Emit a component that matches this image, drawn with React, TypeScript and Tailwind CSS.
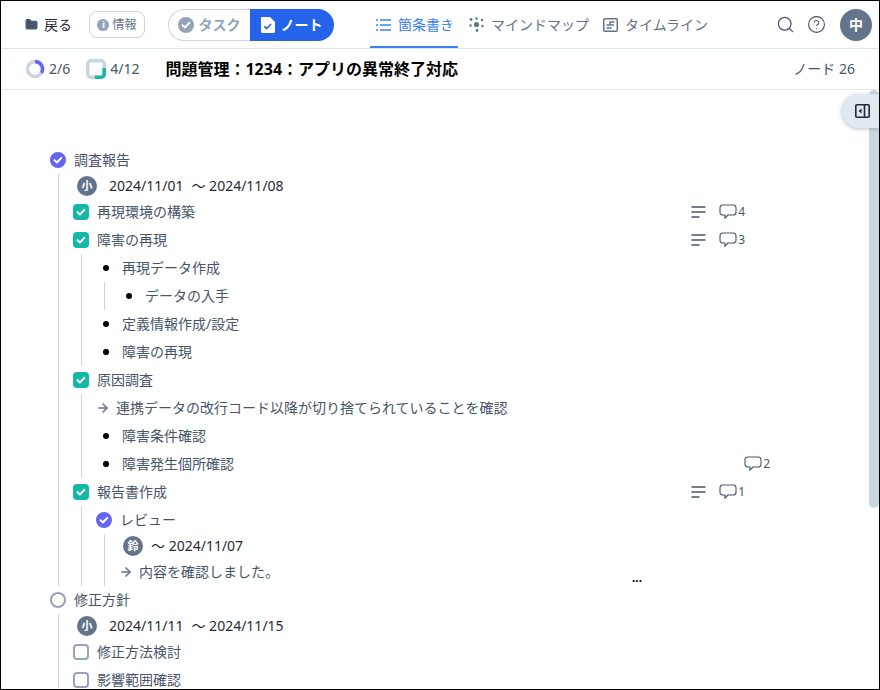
import type { ReactNode } from 'react'
import { ArrowRight, Folder, HelpCircle, Search } from 'lucide-react'

type Kind = 'circle' | 'check' | 'bullet' | 'arrow' | 'date'

type TreeNode = {
  kind: Kind
  text: string
  start?: string
  done?: boolean
  who?: string
  lines?: boolean
  comments?: number
  commentsOnly?: boolean
  children?: TreeNode[]
}

const tree: TreeNode[] = [
  {
    kind: 'circle',
    text: '調査報告',
    done: true,
    children: [
      { kind: 'date', who: '小', start: '2024/11/01', text: '〜 2024/11/08' },
      { kind: 'check', text: '再現環境の構築', done: true, lines: true, comments: 4 },
      {
        kind: 'check',
        text: '障害の再現',
        done: true,
        lines: true,
        comments: 3,
        children: [
          {
            kind: 'bullet',
            text: '再現データ作成',
            children: [{ kind: 'bullet', text: 'データの入手' }],
          },
          { kind: 'bullet', text: '定義情報作成/設定' },
          { kind: 'bullet', text: '障害の再現' },
        ],
      },
      {
        kind: 'check',
        text: '原因調査',
        done: true,
        children: [
          { kind: 'arrow', text: '連携データの改行コード以降が切り捨てられていることを確認' },
          { kind: 'bullet', text: '障害条件確認' },
          { kind: 'bullet', text: '障害発生個所確認', comments: 2, commentsOnly: true },
        ],
      },
      {
        kind: 'check',
        text: '報告書作成',
        done: true,
        lines: true,
        comments: 1,
        children: [
          {
            kind: 'circle',
            text: 'レビュー',
            done: true,
            children: [
              { kind: 'date', who: '鈴', text: '〜 2024/11/07' },
              { kind: 'arrow', text: '内容を確認しました。' },
            ],
          },
        ],
      },
    ],
  },
  {
    kind: 'circle',
    text: '修正方針',
    children: [
      { kind: 'date', who: '小', start: '2024/11/11', text: '〜 2024/11/15' },
      { kind: 'check', text: '修正方法検討' },
      { kind: 'check', text: '影響範囲確認' },
    ],
  },
]

function CheckMark({ className }: { className?: string }) {
  return (
    <svg viewBox="0 0 16 16" className={className} fill="none" stroke="currentColor" strokeWidth="2" strokeLinecap="round" strokeLinejoin="round">
      <path d="M4.6 8.3l2.3 2.2 4.4-4.6" />
    </svg>
  )
}

function LinesIcon() {
  return (
    <svg width="16" height="13" viewBox="0 0 16 13" className="text-[#475569]" fill="none" stroke="currentColor" strokeWidth="1.5">
      <path d="M0.5 1h14M0.5 6h14M0.5 11h8" />
    </svg>
  )
}

function CommentIcon() {
  return (
    <svg width="18" height="16" viewBox="0 0 18 16" className="text-[#475569]" fill="none" stroke="currentColor" strokeWidth="1.1" strokeLinejoin="round">
      <path d="M4 1h10c1.8 0 3 1.1 3 2.8v4.4C17 10 15.8 11 14 11H9l-3.2 3.3.3-3.3H4C2.200 11 1 10 1 8.200V3.800C1 2.100 2.200 1 4 1z" />
    </svg>
  )
}

function Marker({ node }: { node: TreeNode }) {
  if (node.kind === 'circle') {
    return node.done ? (
      <span className="flex h-4 w-4 shrink-0 items-center justify-center rounded-full bg-[#6366f1] text-white">
        <CheckMark className="h-4 w-4" />
      </span>
    ) : (
      <span className="h-4 w-4 shrink-0 rounded-full border-2 border-[#94a3b8]" />
    )
  }
  if (node.kind === 'check') {
    return node.done ? (
      <span className="flex h-4 w-4 shrink-0 items-center justify-center rounded-[4px] bg-[#14b8a6] text-white">
        <CheckMark className="h-4 w-4" />
      </span>
    ) : (
      <span className="h-4 w-4 shrink-0 rounded-[4px] border-2 border-[#94a3b8]" />
    )
  }
  return null
}

function Row({ node }: { node: TreeNode }) {
  let lead: ReactNode
  if (node.kind === 'bullet') {
    lead = (
      <span className="flex w-[26px] shrink-0 pl-[7px]">
        <span className="h-[6px] w-[6px] rounded-full bg-black" />
      </span>
    )
  } else if (node.kind === 'arrow') {
    lead = (
      <span className="flex w-5 shrink-0">
        <ArrowRight size={14} strokeWidth={2.6} className="text-[#64748b]" />
      </span>
    )
  } else if (node.kind === 'date') {
    lead = (
      <span
        className={`ml-1 flex h-5 w-5 shrink-0 items-center justify-center rounded-full bg-[#64748b] text-[11px] font-bold text-white ${
          node.start ? 'mr-3' : 'mr-2'
        }`}
      >
        {node.who}
      </span>
    )
  } else {
    lead = (
      <span className="flex w-6 shrink-0">
        <Marker node={node} />
      </span>
    )
  }

  return (
    <div className={`flex items-center ${node.kind === 'date' ? 'h-6 text-[#1f2937]' : 'h-7 text-[#475569]'}`}>
      {lead}
      {node.start ? <span className="mr-2 whitespace-nowrap">{node.start}</span> : null}
      <span className="whitespace-nowrap leading-4">{node.text}</span>
      <span className="flex-1" />
      {node.comments !== undefined && (
        <div className={`flex items-center ${node.commentsOnly ? 'mr-[109px]' : 'mr-[134px]'}`}>
          {node.lines && (
            <span className="mr-3 flex">
              <LinesIcon />
            </span>
          )}
          <CommentIcon />
          <span className="ml-[1px] text-xs text-[#475569]">{node.comments}</span>
        </div>
      )}
    </div>
  )
}

function Tree({ nodes }: { nodes: TreeNode[] }) {
  return (
    <>
      {nodes.map((node) => (
        <div key={node.text + node.kind}>
          <Row node={node} />
          {node.children ? (
            <div className="ml-2 border-l border-[#cbd5e1] pl-[14px]">
              <Tree nodes={node.children} />
            </div>
          ) : null}
        </div>
      ))}
    </>
  )
}

function TabItem({ icon, label, active }: { icon: ReactNode; label: string; active?: boolean }) {
  return (
    <div
      className={`flex h-full items-center gap-[7px] border-b-2 pt-[2px] pr-1 pl-[6px] ${
        active ? 'border-[#3b82f6] text-[#3b82f6]' : 'border-transparent text-[#64748b]'
      }`}
    >
      {icon}
      <span>{label}</span>
    </div>
  )
}

export default function App() {
  return (
    <div
      className="relative flex h-[690px] w-[880px] flex-col overflow-hidden border border-black bg-white text-sm"
      style={{ fontFamily: '"Noto Sans", "Noto Sans CJK JP", sans-serif' }}
    >
      <header className="flex h-[48px] shrink-0 items-center border-b border-[#dbe4f0]">
        <div className="ml-6 flex items-center gap-[6px] text-[#1f2937]">
          <Folder size={13} fill="#475569" stroke="#475569" />
          <span>戻る</span>
        </div>
        <div className="ml-[17px] flex h-[27px] w-[56px] items-center justify-center gap-[3px] rounded-lg border border-[#cbd5e1] text-xs text-[#64748b]">
          <span className="flex h-3 w-3 items-center justify-center rounded-full bg-[#94a3b8] text-[9px] leading-none font-bold text-white">
            i
          </span>
          情報
        </div>
        <div className="ml-[23px] flex h-[32px] font-bold">
          <div className="flex w-[82px] items-center justify-center gap-[5px] rounded-l-[16px] border border-r-0 border-[#cbd5e1] pr-[1px] text-[#94a3b8]">
            <span className="flex h-4 w-4 items-center justify-center rounded-full bg-[#94a3b8] text-white">
              <CheckMark className="h-4 w-4" />
            </span>
            タスク
          </div>
          <div className="flex w-[84px] items-center justify-center gap-[6px] rounded-r-[16px] bg-[#2563eb] pr-[1px] text-white">
            <svg width="14" height="16" viewBox="0 0 14 16">
              <path d="M1 0h8l5 5v9.500c0 .8-.7 1.500-1.500 1.500h-11C.7 16 0 15.300 0 14.500V1C0 .4.400 0 1 0z" fill="#fff" />
              <path d="M3.500 9.500l2.200 2.100 4-4.200" fill="none" stroke="#2563eb" strokeWidth="1.500" strokeLinecap="round" strokeLinejoin="round" />
            </svg>
            ノート
          </div>
        </div>
        <nav className="ml-[36px] flex h-full">
          <TabItem
            active
            label="箇条書き"
            icon={
              <svg width="15" height="14" viewBox="0 0 15 14" fill="none" stroke="currentColor" strokeWidth="1.500">
                <path d="M4 2h11M4 7h11M4 12h11M0 2h2M0 7h2M0 12h2" />
              </svg>
            }
          />
          <div className="w-[5px]" />
          <TabItem
            label="マインドマップ"
            icon={
              <svg width="15" height="15" viewBox="0 0 15 15" fill="currentColor">
                <circle cx="7.500" cy="7.500" r="2.600" />
                <circle cx="2" cy="2.500" r="1.400" />
                <circle cx="7.500" cy="1.500" r="1.200" />
                <circle cx="13" cy="3" r="1.200" />
                <circle cx="1.500" cy="8.500" r="1.200" />
                <circle cx="13.500" cy="9" r="1.200" />
                <circle cx="8" cy="13.500" r="1.400" />
              </svg>
            }
          />
          <div className="w-[4px]" />
          <TabItem
            label="タイムライン"
            icon={
              <svg width="15" height="14" viewBox="0 0 15 14" fill="none" stroke="currentColor" strokeWidth="1.500">
                <rect x="0.750" y="0.750" width="13.500" height="12.500" rx="1" />
                <path d="M11.500 4H7v3H3.500M11 7H7M3.500 10h5" />
              </svg>
            }
          />
        </nav>
        <span className="flex-1" />
        <Search size={19} strokeWidth={1.600} className="text-[#475569]" />
        <HelpCircle size={19} strokeWidth={1.400} className="ml-[12px] text-[#475569]" />
        <div className="mr-[7px] ml-[14px] flex h-8 w-8 items-center justify-center rounded-full bg-[#64748b] font-bold text-white">
          中
        </div>
      </header>

      <div className="flex h-[41px] shrink-0 items-center border-b border-[#e5e7eb] pr-6 text-[#475569]">
        <svg width="20" height="20" viewBox="0 0 20 20" className="ml-[24px]">
          <circle cx="10" cy="10" r="7.500" fill="none" stroke="#cbd5e1" strokeWidth="3.500" />
          <path d="M10 2.500A7.500 7.500 0 0 1 16.500 13.750" fill="none" stroke="#6366f1" strokeWidth="3.500" />
        </svg>
        <span className="ml-[4px]">2/6</span>
        <svg width="20" height="20" viewBox="0 0 20 20" className="ml-[16px]">
          <rect x="1.800" y="1.800" width="16.400" height="16.400" rx="3" fill="none" stroke="#cbd5e1" strokeWidth="3.500" />
          <path d="M18.200 9v6.200a3 3 0 0 1-3 3H9" fill="none" stroke="#14b8a6" strokeWidth="3.500" />
        </svg>
        <span className="ml-[4px]">4/12</span>
        <h1 className="ml-[26px] text-base font-bold text-black">問題管理：1234：アプリの異常終了対応</h1>
        <span className="flex-1" />
        <span>ノード 26</span>
      </div>

      <main className="relative flex-1 overflow-hidden pt-[56px] pl-[49px]">
        <Tree nodes={tree} />
        <span className="absolute top-[482px] left-[631px] text-xs leading-none font-bold text-black">...</span>
        <div className="absolute top-0 right-0 h-[418px] w-[10px] rounded-t-lg rounded-b-lg bg-[#cbd5e1]" />
        <div className="absolute top-[4px] right-0 flex h-[34px] w-[37px] items-center rounded-l-[16px] bg-[#e2e8f0] pl-[13px] shadow-[0_1px_4px_rgba(100,116,139,0.45)]">
          <svg width="15" height="14" viewBox="0 0 15 14" fill="none" stroke="#1e293b" strokeWidth="1.600">
            <rect x="0.800" y="0.800" width="13.400" height="12.400" rx="1" />
            <path d="M9.500 1v12" />
            <path d="M6.500 4.500v5L3.500 7z" fill="#1e293b" stroke="none" />
          </svg>
        </div>
      </main>
    </div>
  )
}
